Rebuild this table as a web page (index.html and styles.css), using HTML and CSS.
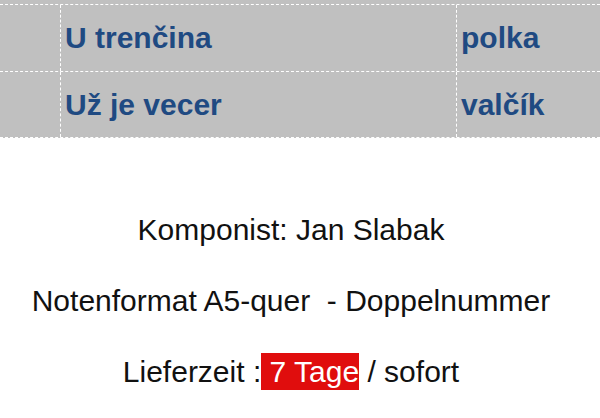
FILE: index.html
```html
<!DOCTYPE html>
<html>
<head>
<meta charset="utf-8">
<link rel="stylesheet" href="styles.css">
</head>
<body>
<div class="table">
  <div class="row">
    <div class="cell first"></div>
    <div class="cell title">U trenčina</div>
    <div class="cell kind">polka</div>
  </div>
  <div class="row last">
    <div class="cell first"></div>
    <div class="cell title">Už je vecer</div>
    <div class="cell kind">valčík</div>
  </div>
</div>
<div class="info">
  <p>Komponist: Jan Slabak</p>
  <p>Notenformat A5-quer&nbsp; - Doppelnummer</p>
  <p>Lieferzeit :<span class="red"> 7 Tage</span> / sofort</p>
</div>
</body>
</html>
```
FILE: styles.css
```css
html, body {
  margin: 0;
  padding: 0;
  background: #fff;
}
body {
  font-family: "Liberation Sans", Arial, sans-serif;
  width: 600px;
  height: 418px;
  overflow: hidden;
}
.table {
  background: #c0c0c0;
  padding-top: 4px;
}
.row {
  display: grid;
  grid-template-columns: 60px 396px 1fr;
  height: 66px;
  border-top: 1px dashed #fff;
}
.row.last {
  height: 65px;
  border-bottom: 1px dashed #fff;
}
.cell {
  display: flex;
  align-items: center;
  font-size: 30px;
  font-weight: bold;
  color: #1f4a82;
  padding-left: 5px;
}
.cell.title, .cell.kind {
  border-left: 1px dashed #fff;
  padding-left: 4px;
}
.info {
  text-align: center;
  padding-right: 18px;
  padding-top: 75px;
  font-size: 30px;
  color: #111;
}
.info p {
  margin: 0 0 37px 0;
  line-height: 34px;
}
.red {
  background: #e00d0d;
  color: #fff;
  padding: 2px 0;
}
```
